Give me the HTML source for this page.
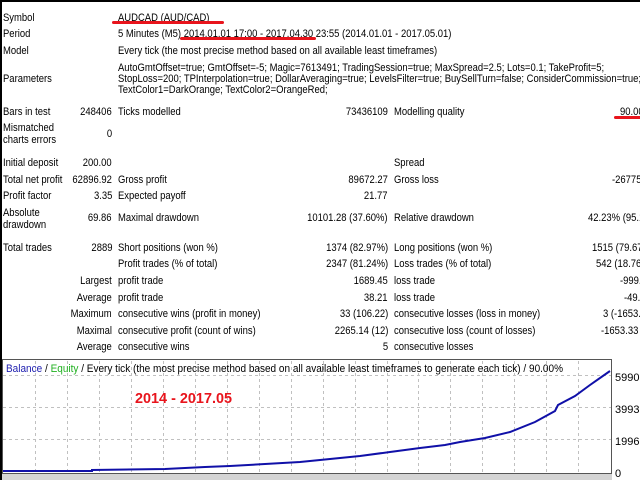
<!DOCTYPE html>
<html><head><meta charset="utf-8"><style>
*{margin:0;padding:0}
body{width:640px;height:480px;background:#fff;position:relative;overflow:hidden;font-family:"Liberation Sans",sans-serif;font-size:11px;color:#000}
.t{position:absolute;white-space:nowrap;line-height:12px;transform:scaleX(0.86);transform-origin:0 0}
.r{position:absolute;white-space:nowrap;line-height:12px;text-align:right;transform:scaleX(0.86);transform-origin:100% 0}
</style></head><body>
<div style="position:absolute;left:0;top:0;width:640px;height:2px;background:#000"></div>
<div style="position:absolute;left:0;top:0;width:2px;height:480px;background:#000"></div>

<div class="t" style="left:3px;top:12px">Symbol</div>
<div class="t" style="left:118px;top:12px">AUDCAD (AUD/CAD)</div>
<div style="position:absolute;left:112px;top:21px;width:112px;height:3px;background:#e8141c;border-radius:2px"></div>
<div class="t" style="left:3px;top:28px">Period</div>
<div class="t" style="left:118px;top:28px">5 Minutes (M5) 2014.01.01 17:00 - 2017.04.30 23:55 (2014.01.01 - 2017.05.01)</div>
<div style="position:absolute;left:180px;top:37px;width:136px;height:3px;background:#e8141c;border-radius:2px"></div>
<div class="t" style="left:3px;top:45px">Model</div>
<div class="t" style="left:118px;top:45px">Every tick (the most precise method based on all available least timeframes)</div>
<div class="t" style="left:3px;top:73px">Parameters</div>
<div class="t" style="left:118px;top:62px">AutoGmtOffset=true; GmtOffset=-5; Magic=7613491; TradingSession=true; MaxSpread=2.5; Lots=0.1; TakeProfit=5;</div>
<div class="t" style="left:118px;top:73px">StopLoss=200; TPInterpolation=true; DollarAveraging=true; LevelsFilter=true; BuySellTurn=false; ConsiderCommission=true;</div>
<div class="t" style="left:118px;top:84px">TextColor1=DarkOrange; TextColor2=OrangeRed;</div>

<div class="t" style="left:3px;top:106px">Bars in test</div>
<div class="r" style="right:528px;top:106px">248406</div>
<div class="t" style="left:118px;top:106px">Ticks modelled</div>
<div class="r" style="right:252px;top:106px">73436109</div>
<div class="t" style="left:394px;top:106px">Modelling quality</div>
<div class="t" style="left:620px;top:106px">90.00%</div>
<div style="position:absolute;left:614px;top:116px;width:30px;height:3px;background:#e8141c;border-radius:2px"></div>

<div class="t" style="left:3px;top:122px">Mismatched<br>charts errors</div>
<div class="r" style="right:528px;top:128px">0</div>

<div class="t" style="left:3px;top:157px">Initial deposit</div>
<div class="r" style="right:528px;top:157px">200.00</div>
<div class="t" style="left:394px;top:157px">Spread</div>

<div class="t" style="left:3px;top:174px">Total net profit</div>
<div class="r" style="right:528px;top:174px">62896.92</div>
<div class="t" style="left:118px;top:174px">Gross profit</div>
<div class="r" style="right:252px;top:174px">89672.27</div>
<div class="t" style="left:394px;top:174px">Gross loss</div>
<div class="t" style="left:612px;top:174px">-26775.35</div>

<div class="t" style="left:3px;top:190px">Profit factor</div>
<div class="r" style="right:528px;top:190px">3.35</div>
<div class="t" style="left:118px;top:190px">Expected payoff</div>
<div class="r" style="right:252px;top:190px">21.77</div>

<div class="t" style="left:3px;top:207px">Absolute<br>drawdown</div>
<div class="r" style="right:528px;top:212px">69.86</div>
<div class="t" style="left:118px;top:212px">Maximal drawdown</div>
<div class="r" style="right:252px;top:212px">10101.28 (37.60%)</div>
<div class="t" style="left:588px;top:212px">42.23% (95.17)</div>
<div class="t" style="left:394px;top:212px">Relative drawdown</div>

<div class="t" style="left:3px;top:242px">Total trades</div>
<div class="r" style="right:528px;top:242px">2889</div>
<div class="t" style="left:118px;top:242px">Short positions (won %)</div>
<div class="r" style="right:252px;top:242px">1374 (82.97%)</div>
<div class="t" style="left:394px;top:242px">Long positions (won %)</div>
<div class="t" style="left:592px;top:242px">1515 (79.67%)</div>

<div class="t" style="left:118px;top:258px">Profit trades (% of total)</div>
<div class="r" style="right:252px;top:258px">2347 (81.24%)</div>
<div class="t" style="left:394px;top:258px">Loss trades (% of total)</div>
<div class="t" style="left:596px;top:258px">542 (18.76%)</div>

<div class="r" style="right:528px;top:275px">Largest</div>
<div class="t" style="left:118px;top:275px">profit trade</div>
<div class="r" style="right:252px;top:275px">1689.45</div>
<div class="t" style="left:394px;top:275px">loss trade</div>
<div class="t" style="left:620px;top:275px">-999.80</div>

<div class="r" style="right:528px;top:292px">Average</div>
<div class="t" style="left:118px;top:292px">profit trade</div>
<div class="r" style="right:252px;top:292px">38.21</div>
<div class="t" style="left:394px;top:292px">loss trade</div>
<div class="t" style="left:624px;top:292px">-49.40</div>

<div class="r" style="right:528px;top:308px">Maximum</div>
<div class="t" style="left:118px;top:308px">consecutive wins (profit in money)</div>
<div class="r" style="right:252px;top:308px">33 (106.22)</div>
<div class="t" style="left:394px;top:308px">consecutive losses (loss in money)</div>
<div class="t" style="left:603px;top:308px">3 (-1653.33)</div>

<div class="r" style="right:528px;top:325px">Maximal</div>
<div class="t" style="left:118px;top:325px">consecutive profit (count of wins)</div>
<div class="r" style="right:252px;top:325px">2265.14 (12)</div>
<div class="t" style="left:394px;top:325px">consecutive loss (count of losses)</div>
<div class="t" style="left:601px;top:325px">-1653.33 (3)</div>

<div class="r" style="right:528px;top:341px">Average</div>
<div class="t" style="left:118px;top:341px">consecutive wins</div>
<div class="r" style="right:252px;top:341px">5</div>
<div class="t" style="left:394px;top:341px">consecutive losses</div>

<svg style="position:absolute;left:0;top:0" width="640" height="480">
<rect x="2" y="474" width="610" height="6" fill="#d4d4d4"/>
<g stroke="#c0c0c0" stroke-dasharray="3,3" stroke-width="1">
<line x1="3" y1="375.5" x2="611" y2="375.5"/><line x1="3" y1="407.5" x2="611" y2="407.5"/><line x1="3" y1="439.5" x2="611" y2="439.5"/>
<line x1="35.5" y1="361" x2="35.5" y2="473"/><line x1="67.5" y1="361" x2="67.5" y2="473"/><line x1="99.5" y1="361" x2="99.5" y2="473"/><line x1="131.5" y1="361" x2="131.5" y2="473"/><line x1="163.5" y1="361" x2="163.5" y2="473"/><line x1="195.5" y1="361" x2="195.5" y2="473"/><line x1="227.5" y1="361" x2="227.5" y2="473"/><line x1="259.5" y1="361" x2="259.5" y2="473"/><line x1="291.5" y1="361" x2="291.5" y2="473"/><line x1="323.5" y1="361" x2="323.5" y2="473"/><line x1="355.5" y1="361" x2="355.5" y2="473"/><line x1="387.5" y1="361" x2="387.5" y2="473"/><line x1="418.5" y1="361" x2="418.5" y2="473"/><line x1="450.5" y1="361" x2="450.5" y2="473"/><line x1="482.5" y1="361" x2="482.5" y2="473"/><line x1="514.5" y1="361" x2="514.5" y2="473"/><line x1="546.5" y1="361" x2="546.5" y2="473"/><line x1="578.5" y1="361" x2="578.5" y2="473"/>
</g>
<rect x="2.5" y="359.5" width="609" height="114" fill="none" stroke="#555" stroke-width="1"/>
<polyline fill="none" stroke="#1010a8" stroke-width="2" points="3,471 92,471 92,470 165,469 205,467 230,466 265,464 300,462 330,459 360,456 390,452 420,448 445,445 460,442 485,438 510,432 535,422 555,411 558,405 575,396 590,385 610,371"/>
<g font-family="Liberation Sans,sans-serif" font-size="11" fill="#000">
<text x="615" y="381">59902</text><text x="615" y="413">39935</text><text x="615" y="445">19968</text><text x="615" y="477">0</text>
</g>
<text x="6" y="372" font-family="Liberation Sans,sans-serif" font-size="11" textLength="557" lengthAdjust="spacingAndGlyphs"><tspan fill="#2020b0">Balance</tspan><tspan fill="#000"> / </tspan><tspan fill="#20b020">Equity</tspan><tspan fill="#000"> / Every tick (the most precise method based on all available least timeframes to generate each tick) / 90.00%</tspan></text>
<text x="135" y="403" font-family="Liberation Sans,sans-serif" font-size="15" font-weight="bold" fill="#e8141c" textLength="97" lengthAdjust="spacingAndGlyphs">2014 - 2017.05</text>
</svg>
</body></html>
